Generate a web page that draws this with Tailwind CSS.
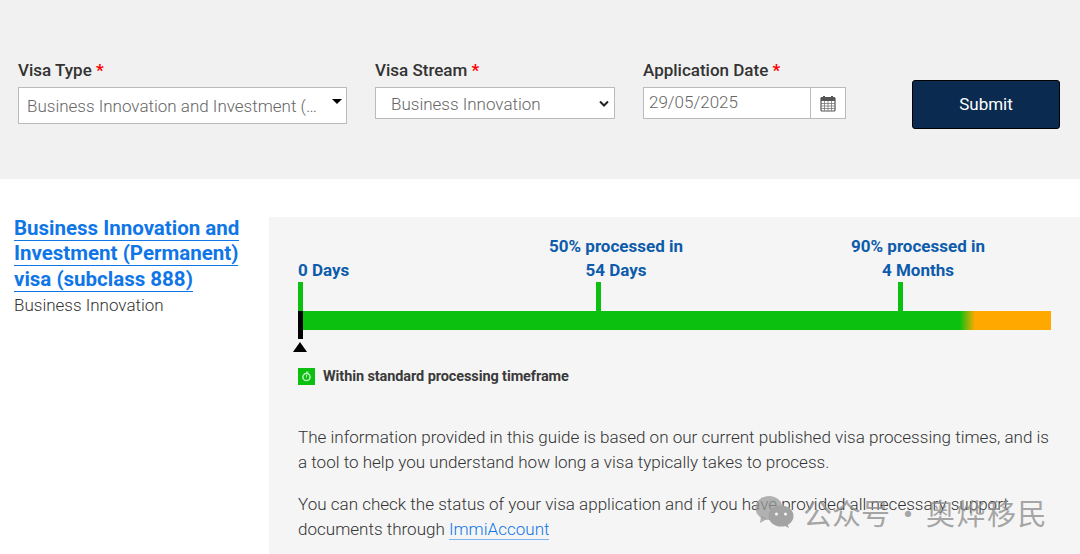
<!DOCTYPE html>
<html lang="en">
<head>
<meta charset="utf-8">
<script src="https://cdn.jsdelivr.net/npm/@tailwindcss/browser@4"></script>
</head>
<body class="bg-white font-['Roboto',sans-serif] text-[#3f3f3f] overflow-hidden">
<div class="relative w-[1080px] h-[554px] overflow-hidden">
  <form class="bg-[#f1f1f1] h-[179px] pl-[18px] pt-[60px] flex items-start">
    <div class="w-[329px] mr-[28px]">
      <div class="text-[17px] leading-[21px] font-medium h-[27px] text-[#333]">Visa Type <span class="text-[#f00] font-bold">*</span></div>
      <div class="h-[37px] bg-white border border-[#bbb] pl-[8px] pr-[8px] flex items-start pt-[8px] relative text-[17px] leading-[21px] text-[#666] font-light">
        <span class="whitespace-nowrap">Business Innovation and Investment (…</span>
        <span class="absolute right-[4px] top-[11px] w-0 h-0 border-x-[5px] border-x-transparent border-t-[5px] border-t-black"></span>
      </div>
    </div>
    <div class="w-[240px] mr-[28px]">
      <div class="text-[17px] leading-[21px] font-medium h-[27px] text-[#333]">Visa Stream <span class="text-[#f00] font-bold">*</span></div>
      <div class="h-[32px] bg-white border border-[#bbb] pl-[15px] pt-[4px] flex items-center relative text-[17px] text-[#666] font-light">
        <span>Business Innovation</span>
        <svg class="absolute right-[5px] top-[12px]" width="10" height="7" viewBox="0 0 10 7"><path d="M1 1.5 5 5.5 9 1.5" fill="none" stroke="#222" stroke-width="2"/></svg>
      </div>
    </div>
    <div class="w-[203px] mr-[66px]">
      <div class="text-[17px] leading-[21px] font-medium h-[27px] text-[#333]">Application Date <span class="text-[#f00] font-bold">*</span></div>
      <div class="h-[32px] bg-white border border-[#bbb] flex items-stretch text-[17px] text-[#666] font-light">
        <span class="flex-1 pl-[5px] flex items-center">29/05/2025</span>
        <span class="w-[35px] border-l border-[#bbb] flex items-center justify-center">
          <svg width="16" height="17" viewBox="0 0 16 17"><rect x="1" y="2.5" width="14" height="13.5" rx="1" fill="#fff" stroke="#555" stroke-width="1.2"/><rect x="1" y="2.5" width="14" height="3.5" fill="#555"/><path d="M4 1v3M12 1v3" stroke="#555" stroke-width="2"/><path d="M1 8.5h14M1 11h14M1 13.5h14M4.5 6v10M8 6v10M11.5 6v10" stroke="#777" stroke-width=".8"/></svg>
        </span>
      </div>
    </div>
    <button type="button" class="mt-[20px] w-[148px] h-[49px] bg-[#0b2a50] border border-black rounded-[3px] text-white text-[17px] font-normal">Submit</button>
  </form>

  <div class="flex items-start pt-[38px]">
    <div class="w-[269px] pl-[14px] pr-[28px] -mt-[1px]">
      <div class="text-[20.5px] leading-[25.3px] font-bold text-[#0f76e8]"><a href="#" class="border-b border-[#0f76e8]">Business Innovation and Investment (Permanent) visa (subclass 888)</a></div>
      <div class="text-[17px] leading-[25px] mt-[1px] font-light text-[#333]">Business Innovation</div>
    </div>
    <div class="w-[811px] h-[337px] bg-[#f5f5f5] pl-[29px] pr-[29px]">
      <div class="relative h-[136px]">
        <div class="absolute left-0 top-[41px] text-[17px] leading-[24px] font-bold text-[#0d5cab]">0 Days</div>
        <div class="absolute left-[198px] w-[240px] top-[17px] text-center text-[17px] leading-[24px] font-bold text-[#0d5cab]">50% processed in<br>54 Days</div>
        <div class="absolute left-[500px] w-[240px] top-[17px] text-center text-[17px] leading-[24px] font-bold text-[#0d5cab]">90% processed in<br>4 Months</div>
        <div class="absolute left-0 top-[65px] w-[5px] h-[29px] bg-[#0bc00f]"></div>
        <div class="absolute left-[298px] top-[65px] w-[5px] h-[29px] bg-[#0bc00f]"></div>
        <div class="absolute left-[600px] top-[65px] w-[5px] h-[29px] bg-[#0bc00f]"></div>
        <div class="absolute left-0 top-[94px] w-[753px] h-[19px] bg-[linear-gradient(90deg,#0bc00f_0,#0bc00f_87.9%,#ffa900_89.9%,#ffa900_100%)]"></div>
        <div class="absolute left-0 top-[94px] w-[5px] h-[28px] bg-black"></div>
        <div class="absolute left-[-5px] top-[125px] w-0 h-0 border-x-[7px] border-x-transparent border-b-[10px] border-b-black"></div>
      </div>
      <div class="flex items-center gap-[8px] mt-[15px] h-[17px]">
        <span class="w-[17px] h-[17px] bg-[#0bc00f] flex items-center justify-center">
          <svg width="11" height="11" viewBox="0 0 11 11"><circle cx="5.5" cy="6" r="3.6" fill="none" stroke="#bff0bf" stroke-width="1.5"/><path d="M5 1.2h2.5" stroke="#bff0bf" stroke-width="1.2"/><path d="M5.5 4v2.5" stroke="#bff0bf" stroke-width="1"/></svg>
        </span>
        <span class="text-[14.5px] font-bold text-[#3a3a3a] tracking-[-0.1px] whitespace-nowrap">Within standard processing timeframe</span>
      </div>
      <p class="mt-[40px] text-[17.05px] leading-[25px] font-light text-[#333]">The information provided in this guide is based on our current published visa processing times, and is a tool to help you understand how long a visa typically takes to process.</p>
      <p class="mt-[17px] text-[17.05px] leading-[24.5px] font-light text-[#333]">You can check the status of your visa application and if you have provided all necessary support documents through <a href="#" class="text-[#0f76e8] border-b border-[#7db5f0]">ImmiAccount</a></p>
    </div>
  </div>

  <div class="absolute left-[755px] top-[493px] flex items-center gap-[9px] text-[#8f8f8f]/80 pointer-events-none">
    <svg width="39" height="34" viewBox="0 0 39 34">
      <ellipse cx="14" cy="13" rx="13.5" ry="12" fill="#999" fill-opacity=".75"/>
      <path d="M6 21 5 28l7-4z" fill="#999" fill-opacity=".75"/>
      <ellipse cx="26" cy="21" rx="12.5" ry="10.5" fill="#a3a3a3"/>
      <path d="M32 28l2 5-6-3z" fill="#a3a3a3"/>
      <circle cx="21.5" cy="19" r="1.6" fill="#f4f4f4"/><circle cx="30.5" cy="19" r="1.6" fill="#f4f4f4"/>
    </svg>
    <span class="text-[29px] leading-[38px] font-['Noto_Sans_CJK_SC',sans-serif] whitespace-nowrap">公众号<span class="mx-[-3px]"> · </span><span class="tracking-[1.5px]">奥烨移民</span></span>
  </div>
</div>
</body>
</html>
